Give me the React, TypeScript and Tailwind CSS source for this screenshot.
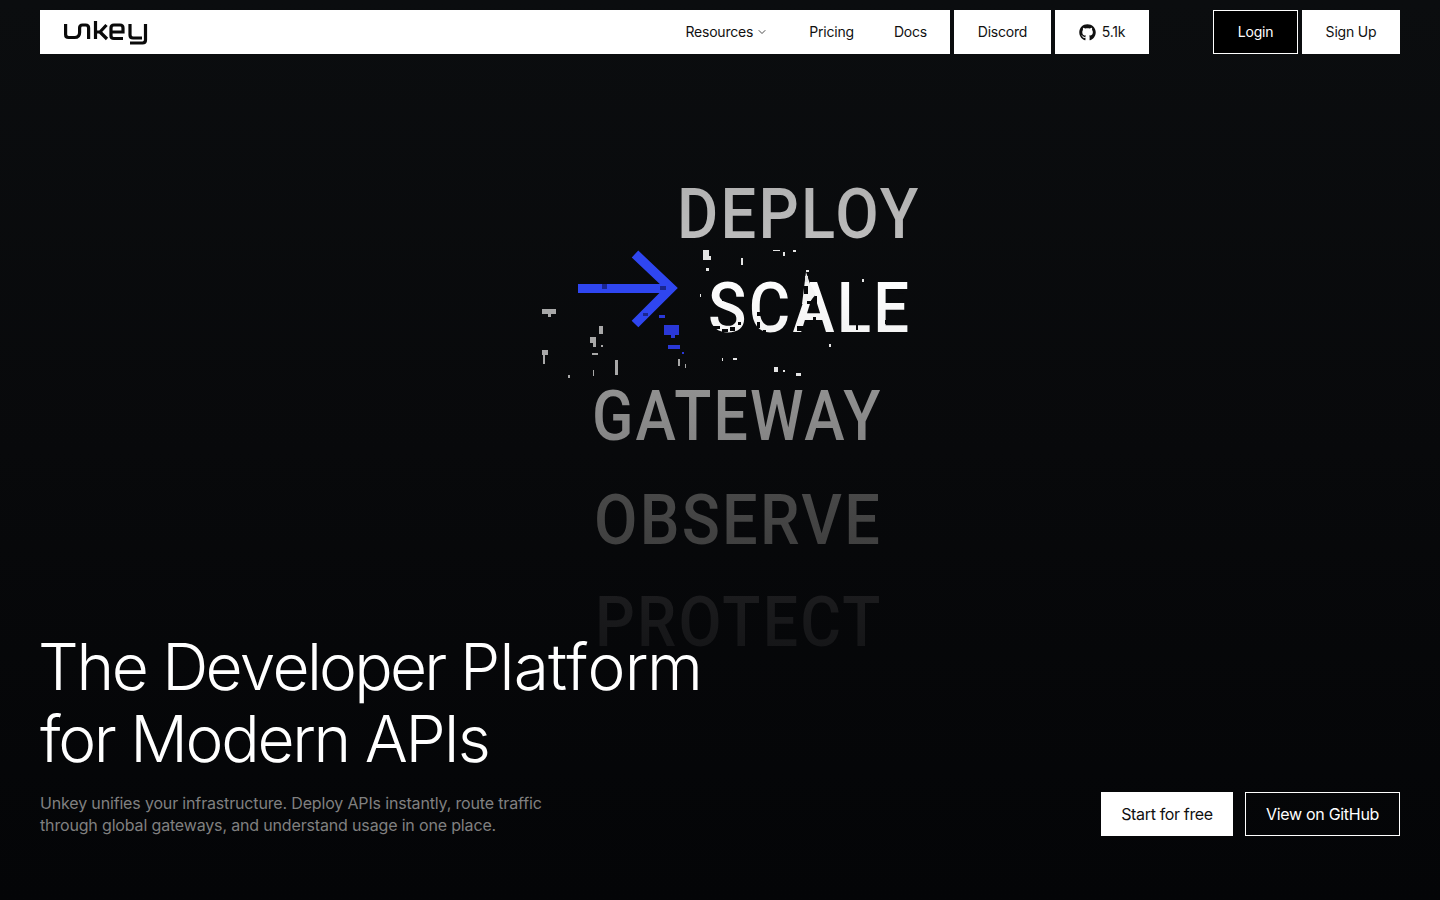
import { ChevronDown } from "lucide-react";
import { FaGithub } from "react-icons/fa";

const words = [
  { label: "DEPLOY", row: "h-[94px] ml-[107px] scale-x-[0.89]", tone: "from-[#b0b0b0] to-[#c2c2c2]" },
  { label: "SCALE", row: "h-[108px] ml-[138px] scale-x-[0.895]", tone: "from-[#ffffff] to-[#ececec]" },
  { label: "GATEWAY", row: "h-[104px] ml-[22px] scale-x-[0.856]", tone: "from-[#939393] to-[#7c7c7c]" },
  { label: "OBSERVE", row: "h-[102px] ml-[24px] scale-x-[0.888]", tone: "from-[#4a4a4a] to-[#3a3a3a]" },
  { label: "PROTECT", row: "h-[102px] ml-[25px] scale-x-[0.88]", tone: "from-[#1d1d1f] to-[#111214]" },
];

// speckles left by the dissolve effect, page px
const whiteSpecks = [
  [703, 250, 6, 10], [708, 256, 3, 4], [706, 268, 3, 3], [741, 258, 2, 7], [773, 250, 7, 1], [783, 252, 2, 4], [793, 250, 3, 2],
  [806, 270, 3, 2], [542, 309, 14, 5], [548, 314, 3, 3], [599, 326, 4, 8], [590, 337, 6, 6], [593, 343, 3, 4],
  [592, 353, 6, 2], [542, 350, 6, 5], [543, 355, 2, 9], [615, 360, 3, 15], [601, 345, 2, 2], [568, 375, 2, 3],
  [593, 370, 1, 6], [678, 359, 2, 7], [685, 364, 1, 4], [722, 358, 1, 3], [733, 358, 4, 2], [774, 367, 4, 5],
  [783, 370, 2, 2], [796, 373, 5, 3], [829, 344, 2, 3], [700, 294, 1, 3], [862, 279, 2, 3], [805, 276, 3, 6],
];
const blueSpecks = [
  [659, 315, 6, 3], [664, 325, 15, 10], [671, 335, 4, 3], [668, 345, 12, 4], [682, 352, 2, 2],
];
const cutSpecks = [
  [722, 300, 7, 1], [713, 326, 7, 3], [722, 329, 6, 3], [730, 327, 5, 4], [738, 322, 3, 3], [757, 312, 6, 4], [757, 322, 3, 6],
  [763, 330, 3, 3], [804, 286, 4, 8], [807, 301, 5, 3], [813, 308, 3, 4], [813, 317, 3, 3], [806, 325, 6, 2], [797, 326, 7, 5],
  [834, 325, 3, 2], [866, 322, 4, 2], [856, 322, 2, 8], [898, 293, 6, 1], [885, 320, 3, 4], [815, 296, 2, 8], [829, 302, 2, 4],
];

function UnkeyLogo() {
  return (
    <svg width="84" height="28" viewBox="0 0 84 28" fill="none" stroke="#0a0a0a" strokeWidth="3.2" aria-label="unkey">
      <path d="M1.600 6v10.500q0 3 3 3h6q5 0 5-5V10q0-3 3-3h3q3 0 3 3v11" />
      <path d="M31.500 3v18M32 14h4l6.500-7M36 14l7 7" />
      <path d="M47 14h12v-4q0-3-3-3h-6q-3 0-3 3v8q0 2.500 3 2.500h9" />
      <path d="M66 6v11q0 3 3 3h9M81.500 6v16q0 3-3 3H66" />
    </svg>
  );
}

function NavItem({ children, className = "" }: { children: React.ReactNode; className?: string }) {
  return <a className={`flex h-11 items-center justify-center bg-white text-sm tracking-[-0.2px] text-[#111] ${className}`}>{children}</a>;
}

function HeroArt() {
  return (
    <div className="absolute inset-0 overflow-hidden" aria-hidden>
      <div className="absolute left-[570px] top-[176px] flex flex-col">
        {words.map((w) => (
          <div
            key={w.label}
            className={`w-fit origin-left bg-gradient-to-b bg-clip-text text-[71px] leading-[76px] font-medium tracking-[2.5px] text-transparent font-['Roboto',sans-serif] ${w.row} ${w.tone}`}
          >
            {w.label}
          </div>
        ))}
      </div>
      <svg className="absolute left-0 top-0 blur-[0.5px]" width="1440" height="900" fill="none">
        <path d="M578 288.500H668" stroke="#2f46f0" strokeWidth="9" />
        <path d="M635 254L671 288L635 324" stroke="#2f46f0" strokeWidth="9.500" />
        <path d="M602 284h5v5h-5zM660 286h6v4h-6zM643 313h5v3h-5z" fill="#1a2690" />
        <path d="M806 272l4 12 6 10-8 10h-6z" fill="#f4f4f4" />
        {cutSpecks.map(([x, y, w, h], i) => (
          <rect key={i} x={x} y={y} width={w} height={h} fill="#08090b" />
        ))}
        {whiteSpecks.map(([x, y, w, h], i) => (
          <rect key={i} x={x} y={y} width={w} height={h} fill={x < 690 ? "#a8a8a8" : "#e4e4e4"} />
        ))}
        {blueSpecks.map(([x, y, w, h], i) => (
          <rect key={i} x={x} y={y} width={w} height={h} fill="#2a38d8" />
        ))}
      </svg>
    </div>
  );
}

export default function App() {
  return (
    <div className="relative flex h-[900px] w-full flex-col justify-between overflow-hidden bg-gradient-to-b from-[#0b0d0f] via-[#08090b] to-[#040507] px-10 font-['Inter',sans-serif]">
      <HeroArt />

      <header className="relative flex items-start justify-between pt-2.5">
        <div className="flex gap-1">
          <div className="flex h-11 w-[910px] items-center justify-between bg-white pl-6 pr-[3px]">
            <UnkeyLogo />
            <nav className="flex items-center">
              <NavItem className="gap-[3px] pr-[21px]">
                Resources <ChevronDown size={12} strokeWidth={1.5} />
              </NavItem>
              <NavItem className="px-5">Pricing</NavItem>
              <NavItem className="px-5">Docs</NavItem>
            </nav>
          </div>
          <NavItem className="w-[97px]">Discord</NavItem>
          <NavItem className="w-[94px] gap-1.5">
            <FaGithub size={17} /> 5.1k
          </NavItem>
        </div>
        <div className="flex gap-1">
          <a className="flex h-11 w-[85px] items-center justify-center border border-white bg-black text-sm tracking-[-0.2px] text-white">Login</a>
          <NavItem className="w-[98px]">Sign Up</NavItem>
        </div>
      </header>

      <section className="relative flex items-end justify-between pb-16">
        <div>
          <h1 className="text-[64px] leading-[72px] font-light tracking-[-2.3px] text-white">
            <span className="-ml-[2px] block [font-kerning:none]">
              The <span className="tracking-[-2.8px]">Developer</span> <span className="tracking-[-0.8px]">Platform</span>
            </span>
            <span className="block">for Modern APIs</span>
          </h1>
          <p className="mt-[17px] text-base leading-[22px] tracking-[-0.16px] text-[#808080]">
            Unkey unifies your infrastructure. Deploy APIs instantly, route traffic
            <br />
            through global gateways, and understand usage in one place.
          </p>
        </div>
        <div className="flex gap-3">
          <a className="flex h-11 w-[132px] items-center justify-center bg-white text-base tracking-[-0.35px] text-[#111]">Start for free</a>
          <a className="flex h-11 w-[155px] items-center justify-center border border-white text-base tracking-[-0.3px] text-white">View on GitHub</a>
        </div>
      </section>
    </div>
  );
}
